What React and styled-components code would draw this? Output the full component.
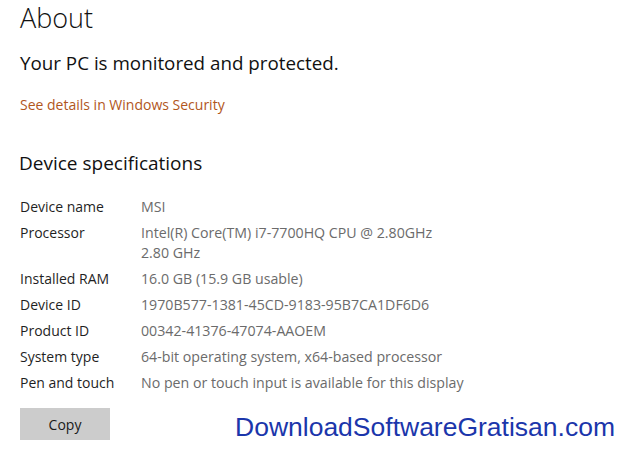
import styled, { createGlobalStyle } from "styled-components"

const GlobalStyle = createGlobalStyle`
    html, body {
        margin: 0;
        padding: 0;
        background: #ffffff;
    }
    body {
        font-family: "Open Sans", "Noto Sans", sans-serif;
    }
`

const specs = [
    { label: "Device name", value: ["MSI"] },
    { label: "Processor", value: ["Intel(R) Core(TM) i7-7700HQ CPU @ 2.80GHz", "2.80 GHz"] },
    { label: "Installed RAM", value: ["16.0 GB (15.9 GB usable)"] },
    { label: "Device ID", value: ["1970B577-1381-45CD-9183-95B7CA1DF6D6"] },
    { label: "Product ID", value: ["00342-41376-47074-AAOEM"] },
    { label: "System type", value: ["64-bit operating system, x64-based processor"] },
    { label: "Pen and touch", value: ["No pen or touch input is available for this display"] },
]

const App = () => {
    return (
        <StPage>
            <GlobalStyle />
            <StTitle>About</StTitle>
            <StStatus>Your PC is monitored and protected.</StStatus>
            <StLink>See details in Windows Security</StLink>
            <StSection>Device specifications</StSection>
            <StSpecList>
                {specs.map((s) => (
                    <StSpecRow key={s.label}>
                        <StLabel>{s.label}</StLabel>
                        <StValue>
                            {s.value.map((v) => (
                                <div key={v}>{v}</div>
                            ))}
                        </StValue>
                    </StSpecRow>
                ))}
            </StSpecList>
            <StFooter>
                <StCopyButton>Copy</StCopyButton>
                <StWatermark>DownloadSoftwareGratisan.com</StWatermark>
            </StFooter>
        </StPage>
    )
}

export default App

const StPage = styled.div`
    width: 625px;
    height: 450px;
    box-sizing: border-box;
    padding: 0 0 0 20px;
    overflow: hidden;
    color: #1a1a1a;
`
const StTitle = styled.h1`
    margin: 0;
    padding-top: 0;
    font-size: 27px;
    font-weight: 300;
    line-height: 36px;
    color: #111;
`
const StStatus = styled.div`
    margin-top: 14px;
    font-size: 18.8px;
    line-height: 26px;
    font-weight: 400;
    color: #111;
`
const StLink = styled.div`
    margin-top: 19px;
    font-size: 14px;
    line-height: 20px;
    color: #b1561c;
`
const StSection = styled.h2`
    margin: 0;
    margin-top: 35px;
    margin-left: -1px;
    font-size: 19px;
    line-height: 26px;
    font-weight: 400;
    color: #111;
`
const StSpecList = styled.div`
    margin-top: 21px;
    display: flex;
    flex-direction: column;
    gap: 6px;
`
const StSpecRow = styled.div`
    display: grid;
    grid-template-columns: 121px 1fr;
    font-size: 14px;
    line-height: 20px;
`
const StLabel = styled.div`
    color: #1f1f1f;
`
const StValue = styled.div`
    color: #6b6b6b;
    font-size: 14.2px;
`
const StFooter = styled.div`
    margin-top: 15px;
    display: flex;
    align-items: flex-start;
`
const StCopyButton = styled.button`
    width: 90px;
    height: 32px;
    border: none;
    background: #cccccc;
    color: #1a1a1a;
    font-family: "Open Sans", "Noto Sans", sans-serif;
    font-size: 14px;
    padding: 0;
`
const StWatermark = styled.div`
    margin-left: 125px;
    margin-top: 4px;
    font-family: "Liberation Sans", Arial, sans-serif;
    font-size: 26.5px;
    line-height: 30px;
    color: #1b36ab;
`
